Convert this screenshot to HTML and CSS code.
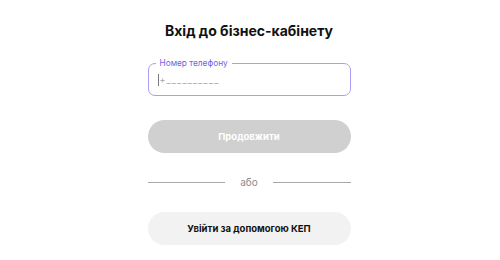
FILE: index.html
```html
<!DOCTYPE html>
<html lang="uk">
  <head>
    <meta charset="UTF-8" />
    <meta name="viewport" content="width=device-width, initial-scale=1.0" />
    <title>Вхід до бізнес-кабінету</title>
    <link rel="stylesheet" href="styles.css">
  </head>
  <body>
    <div class="login">
      <h1>Вхід до бізнес-кабінету</h1>

      <div class="field">
        <span class="field-label">Номер телефону</span>
        <div class="field-value">
          <span class="caret"></span><span class="plus">+</span><span class="mask">__________</span>
        </div>
      </div>

      <button class="btn btn-primary" disabled>Продовжити</button>

      <div class="divider">
        <span class="divider-line"></span>
        <span class="divider-text">або</span>
        <span class="divider-line"></span>
      </div>

      <button class="btn btn-secondary">Увійти за допомогою КЕП</button>
    </div>
  </body>
</html>
```

FILE: styles.css
```css
body {
  margin: 0;
  font-family: Inter, 'Noto Sans', sans-serif;
  color: #111;
  background: #fff;
}
.login {
  width: 203px;
  margin: 0 auto;
  padding-top: 21px;
  transform: translateX(-1px);
}
h1 {
  margin: 0;
  font-size: 14px;
  line-height: 20px;
  font-weight: 700;
  text-align: center;
  white-space: nowrap;
}
.field {
  position: relative;
  margin-top: 22px;
  height: 33px;
  box-sizing: border-box;
  border: 1px solid #a99ff2;
  border-radius: 7px;
}
.field-label {
  position: absolute;
  left: 7px;
  top: -7px;
  padding: 0 4px;
  background: #fff;
  font-size: 8.3px;
  line-height: 12px;
  color: #6c5fe6;
}
.field-value {
  display: flex;
  align-items: center;
  height: 100%;
  padding-left: 9px;
  font-size: 9px;
  color: #a5a5a5;
}
.caret {
  width: 1px;
  height: 12px;
  background: #777;
  margin-right: 1px;
}
.plus {
  margin-right: 1px;
}
.mask {
  letter-spacing: 1.2px;
}
.btn {
  display: block;
  width: 100%;
  height: 33px;
  border: none;
  border-radius: 17px;
  font-family: inherit;
  font-size: 9.5px;
  font-weight: 700;
}
.btn-primary {
  margin-top: 24px;
  background: #d0d0d0;
  color: #fff;
}
.btn-secondary {
  margin-top: 20px;
  background: #f2f2f2;
  color: #111;
  cursor: pointer;
}
.divider {
  display: flex;
  align-items: center;
  gap: 15px;
  height: 20px;
  margin-top: 19px;
}
.divider-line {
  flex: 1;
  height: 1px;
  background: #a8a8a8;
}
.divider-text {
  font-size: 10px;
  color: #8c8c8c;
}
```
